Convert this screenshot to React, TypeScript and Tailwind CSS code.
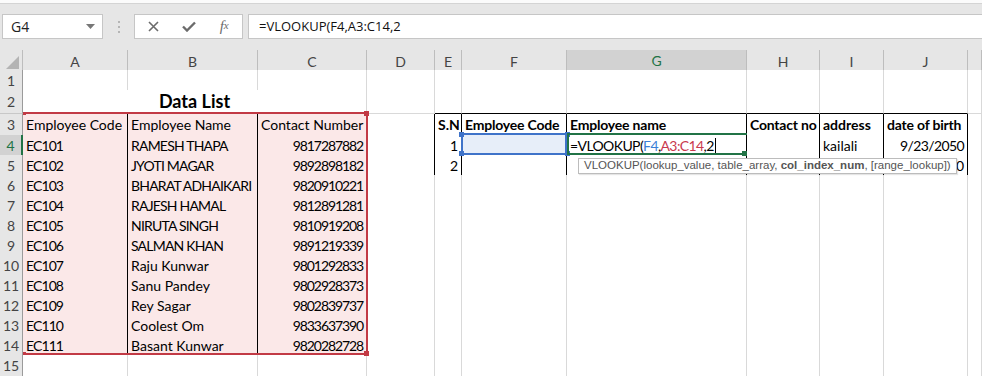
import React from "react";

type Cell = {
  t?: React.ReactNode;
  b?: boolean;
  r?: boolean;
  c?: boolean;
  fill?: "pink" | "blue";
  bk?: boolean;
  bkB?: boolean;
  bkR?: boolean;
  span?: boolean;
  big?: boolean;
  tr?: string;
};

const COLS = ["A", "B", "C", "D", "E", "F", "G", "H", "I", "J", ""];

const people: [string, string, string][] = [
  ["EC101", "RAMESH THAPA", "9817287882"],
  ["EC102", "JYOTI MAGAR", "9892898182"],
  ["EC103", "BHARAT ADHAIKARI", "9820910221"],
  ["EC104", "RAJESH HAMAL", "9812891281"],
  ["EC105", "NIRUTA SINGH", "9810919208"],
  ["EC106", "SALMAN KHAN", "9891219339"],
  ["EC107", "Raju Kunwar", "9801292833"],
  ["EC108", "Sanu Pandey", "9802928373"],
  ["EC109", "Rey Sagar", "9802839737"],
  ["EC110", "Coolest Om", "9833637390"],
  ["EC111", "Basant Kunwar", "9820282728"],
];

const Formula = () => (
  <span className="tracking-[-0.6px]">
    =VLOOKUP(<span className="text-[#3c7fd6]">F4</span>,<span className="text-[#c9394d]">A3:C14</span>,2
    <span className="inline-block w-px h-[15px] bg-black align-[-2px] ml-px" />
  </span>
);

function buildRows(): { n: number; h: string; cells: Cell[] }[] {
  const rows: { n: number; h: string; cells: Cell[] }[] = [];
  const empty = (): Cell[] => Array.from({ length: 11 }, () => ({}));
  rows.push({ n: 1, h: "h-[20px]", cells: empty() });
  rows.push({
    n: 2,
    h: "h-[24px]",
    cells: [
      { t: "Data List", b: true, c: true, big: true, span: true, bkB: true },
      {},
      { bkB: true },
      { bkB: true },
      { bkB: true },
      { bkB: true },
      { bkB: true },
      { bkB: true },
      {},
    ],
  });
  rows.push({
    n: 3,
    h: "h-[21px]",
    cells: [
      { t: "Employee Code", fill: "pink", bk: true },
      { t: "Employee Name", fill: "pink", bk: true },
      { t: "Contact Number", fill: "pink", bk: true },
      { bkR: true },
      { t: "S.N", b: true, bk: true },
      { t: "Employee Code", b: true, bk: true, tr: "tracking-[-0.2px]" },
      { t: "Employee name", b: true, bk: true, tr: "tracking-[-0.2px]" },
      { t: "Contact no", b: true, bk: true, tr: "tracking-[-0.2px]" },
      { t: "address", b: true, bk: true },
      { t: "date of birth", b: true, bk: true, tr: "tracking-[-0.2px]" },
      {},
    ],
  });
  people.forEach((p, i) => {
    const n = i + 4;
    const caps = p[1] === p[1].toUpperCase();
    const cells: Cell[] = [
      { t: p[0], fill: "pink", bk: true, tr: "tracking-[-0.9px]" },
      { t: p[1], fill: "pink", bk: true, tr: caps ? "tracking-[-0.8px]" : "" },
      { t: p[2], fill: "pink", bk: true, r: true, tr: "tracking-[-1.1px]" },
    ];
    if (n === 4) {
      cells.push(
        { bkR: true },
        { t: "1", r: true, bk: true },
        { fill: "blue", bk: true },
        { t: <Formula />, bk: true },
        { bk: true },
        { t: "kailali", bk: true },
        { t: "9/23/2050", r: true, bk: true, tr: "tracking-[-0.6px]" },
        {}
      );
    } else if (n === 5) {
      cells.push(
        { bkR: true },
        { t: "2", r: true, bk: true },
        { bk: true },
        { bk: true },
        { bk: true },
        { bk: true },
        { t: "0", r: true, bk: true },
        {}
      );
    } else {
      for (let k = 0; k < 8; k++) cells.push({});
    }
    rows.push({ n, h: "h-[20px]", cells });
  });
  rows.push({ n: 15, h: "h-[20px]", cells: empty() });
  return rows;
}

function GridCell({ c }: { c: Cell }) {
  const right = c.bk || c.bkR ? "border-r-black" : "border-r-[#d9d9d9]";
  const bottom = c.bk || c.bkB ? "border-b-black" : "border-b-[#d9d9d9]";
  const fill = c.fill === "pink" ? "bg-[#fbe8e8]" : c.fill === "blue" ? "bg-[#e7eef9]" : "bg-white";
  return (
    <div
      className={[
        "box-border border-r border-b flex items-end whitespace-nowrap px-[3px] pb-px text-black",
        right,
        bottom,
        fill,
        c.tr || "",
        c.span ? "col-span-3" : "",
        c.r ? "justify-end" : c.c ? "justify-center" : "",
        c.b ? "font-bold" : "",
        c.big ? "text-[18px] leading-[21px]" : "text-[14px] leading-[18px]",
      ].join(" ")}
    >
      {c.t}
    </div>
  );
}

function FormulaBar() {
  return (
    <div className="h-[50px] bg-[#e6e6e6] [font-family:'Open_Sans',sans-serif]">
      <div className="h-[4px] bg-[#fbfbfb] border-b border-[#d4d4d4]" />
      <div className="flex mt-[10px] h-[25px]">
        <div className="ml-[2px] w-[101px] box-border border border-[#c6c6c6] bg-white flex items-center pl-[8px] pr-[7px] text-[14px] text-[#222]">
          <span className="flex-1">G4</span>
          <svg width="9" height="5" viewBox="0 0 9 5">
            <path d="M0 0 L9 0 L4.5 5 Z" fill="#777" />
          </svg>
        </div>
        <div className="w-[31px] flex flex-col items-center justify-center gap-[3px]">
          <span className="w-[2px] h-[2px] bg-[#b5b5b5]" />
          <span className="w-[2px] h-[2px] bg-[#b5b5b5]" />
          <span className="w-[2px] h-[2px] bg-[#b5b5b5]" />
        </div>
        <div className="w-[109px] box-border border border-[#c6c6c6] bg-white flex items-center">
          <div className="w-[38px] flex justify-center">
            <svg width="11" height="11" viewBox="0 0 11 11">
              <path d="M1 1 L10 10 M10 1 L1 10" stroke="#6b6b6b" strokeWidth="1.6" />
            </svg>
          </div>
          <div className="w-[34px] flex justify-center">
            <svg width="14" height="11" viewBox="0 0 14 11">
              <path d="M1 5.5 L5 9.5 L13 1.5" stroke="#6b6b6b" strokeWidth="2.4" fill="none" />
            </svg>
          </div>
          <div className="w-[36px] flex justify-center italic text-[#6b6b6b] text-[15px] [font-family:'Liberation_Serif',serif]">
            f<span className="text-[11px] relative top-[2px]">x</span>
          </div>
        </div>
        <div className="ml-[5px] flex-1 box-border border border-r-0 border-[#c6c6c6] bg-white flex items-center pl-[10px] text-[13px] text-[#111]">
          =VLOOKUP(F4,A3:C14,2
        </div>
      </div>
    </div>
  );
}

export default function App() {
  const rows = buildRows();
  const grid = "grid grid-cols-[23px_105px_130px_109px_68px_27px_105px_180px_73px_64px_84px_1fr]";
  return (
    <div className="relative w-[982px] h-[376px] overflow-hidden bg-white">
      <FormulaBar />
      <div className="[font-family:Lato,sans-serif]">
        <div className={grid + " h-[20px] bg-[#e6e6e6]"}>
          <div className="box-border border-r border-b border-r-[#bdbdbd] border-b-[#ababab] flex items-end justify-end p-[3px]">
            <svg width="13" height="13" viewBox="0 0 13 13">
              <path d="M13 0 L13 13 L0 13 Z" fill="#b4b4b4" />
            </svg>
          </div>
          {COLS.map((c, i) =>
            c === "G" ? (
              <div
                key={i}
                className="box-border border-r border-r-[#bdbdbd] border-b-2 border-b-[#217346] bg-[#d2d2d2] text-[#217346] text-[14px] flex items-center justify-center"
              >
                {c}
              </div>
            ) : (
              <div
                key={i}
                className="box-border border-r border-b border-r-[#bdbdbd] border-b-[#ababab] text-[#444] text-[14px] flex items-center justify-center"
              >
                {c}
              </div>
            )
          )}
        </div>
        {rows.map((row) => (
          <div key={row.n} className={grid + " " + row.h}>
            {row.n === 4 ? (
              <div className="box-border border-r-2 border-b border-r-[#217346] border-b-[#c8c8c8] bg-[#d2d2d2] text-[#217346] text-[14px] flex items-center justify-center">
                {row.n}
              </div>
            ) : (
              <div className="box-border border-r border-b border-r-[#9b9b9b] border-b-[#c8c8c8] bg-[#e6e6e6] text-[#444] text-[14px] flex items-center justify-center">
                {row.n}
              </div>
            )}
            {row.cells.map((c, i) => (
              <GridCell key={i} c={c} />
            ))}
          </div>
        ))}
      </div>

      {/* range reference A3:C14 */}
      <div className="absolute left-[23px] top-[112px] w-[345px] h-[243px] border-t-2 border-r-2 border-b-2 border-[#c23a45]" />
      <div className="absolute left-[364px] top-[111px] w-[5px] h-[5px] bg-[#c23a45]" />
      <div className="absolute left-[364px] top-[351px] w-[5px] h-[5px] bg-[#c23a45]" />
      <div className="absolute left-[23px] top-[112px] w-[3px] h-[3px] bg-[#c23a45]" />
      <div className="absolute left-[23px] top-[352px] w-[3px] h-[3px] bg-[#c23a45]" />

      {/* reference F4 */}
      <div className="absolute left-[461px] top-[133px] w-[106px] h-[22px] border-2 border-[#3f73c9]" />
      <div className="absolute left-[459px] top-[132px] w-[5px] h-[5px] bg-[#3f73c9]" />
      <div className="absolute left-[565px] top-[132px] w-[5px] h-[5px] bg-[#3f73c9]" />
      <div className="absolute left-[459px] top-[151px] w-[5px] h-[5px] bg-[#3f73c9]" />
      <div className="absolute left-[565px] top-[151px] w-[5px] h-[5px] bg-[#3f73c9]" />

      {/* active cell G4 */}
      <div className="absolute left-[567px] top-[133px] w-[180px] h-[22px] border-t-2 border-b-2 border-l-2 border-[#217346]" />
      <div className="absolute left-[742px] top-[151px] w-[5px] h-[5px] bg-[#217346]" />

      {/* formula tooltip */}
      <div className="absolute left-[578px] top-[158px] w-[379px] h-[16px] box-border border border-[#bcbcbc] bg-white shadow-[1px_1px_1px_rgba(0,0,0,0.1)] pl-[5px] flex items-center text-[11.5px] text-[#555] whitespace-nowrap [font-family:'Liberation_Sans',sans-serif]">
        <span>
          VLOOKUP(lookup_value, table_array, <span className="font-bold">col_index_num</span>, [range_lookup])
        </span>
      </div>
    </div>
  );
}
